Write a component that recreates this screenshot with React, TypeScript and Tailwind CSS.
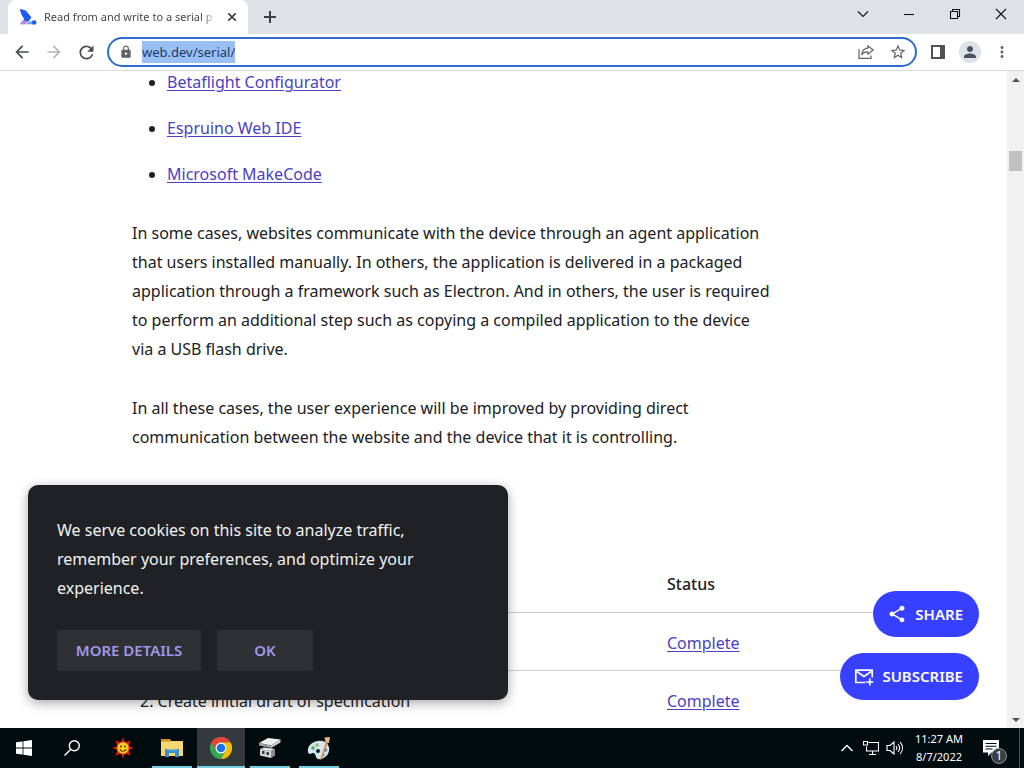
import type { ReactNode } from 'react'
import {
  MdArrowBack,
  MdArrowForward,
  MdLock,
  MdMoreVert,
  MdPerson,
  MdRefresh,
  MdShare,
  MdStarBorder,
} from 'react-icons/md'

const apps = ['Betaflight Configurator', 'Espruino Web IDE', 'Microsoft MakeCode']

const steps = [
  { name: '', status: 'Complete' },
  { name: '2. Create initial draft of specification', status: 'Complete' },
]

function SiteIcon() {
  return (
    <svg className="w-[17px] h-4 shrink-0" viewBox="0 0 17 16">
      <path d="M.6 0 5 1.200a2 2 0 0 1 1 .6l5.300 6.400-3 4.400-4.500-3L1.500 5.500 0 1Z" fill="#1a5cf5" />
      <path d="m3.200 11 5.600.6-2.400 3a2 2 0 0 1-1.600.9H1c-.8 0-1-.6-.6-1.200Z" fill="#b98ae6" />
      <path d="M11.300 8.200 8.300 12.500l-5.100-1.300L6 8Z" fill="#1a5cf5" />
      <path d="M6.400 15.200c1.500-2.400 3.600-3 7.600-3.500v3.600Z" fill="#6aa5f8" />
      <circle cx="14.200" cy="13.500" r="2.300" fill="#1a5cf5" />
    </svg>
  )
}

function ChromeIcon() {
  return (
    <svg className="w-[22px] h-[22px]" viewBox="0 0 24 24">
      <circle cx="12" cy="12" r="12" fill="#34a853" />
      <path d="M1.600 6A12 12 0 0 1 22.400 6H12a6 6 0 0 0-5.200 9Z" fill="#ea4335" />
      <path d="M22.400 6A12 12 0 0 1 12 24l5.200-9A6 6 0 0 0 12 6Z" fill="#fbbc04" />
      <circle cx="12" cy="12" r="6" fill="#fff" />
      <circle cx="12" cy="12" r="4.700" fill="#1a73e8" />
    </svg>
  )
}

function SunIcon() {
  return (
    <svg className="w-[22px] h-[22px]" viewBox="0 0 22 22">
      <path
        d="M11 0 12.900 5.500 18.800 3.200 16.500 9.100 22 11 16.500 12.900 18.800 18.800 12.900 16.500 11 22 9.100 16.500 3.200 18.800 5.500 12.900 0 11 5.500 9.100 3.200 3.200 9.100 5.500Z"
        fill="#d9170e"
      />
      <circle cx="11" cy="11" r="6" fill="#fcd31c" stroke="#f0521a" />
      <circle cx="9" cy="9.500" r="1" fill="#5b2b00" />
      <circle cx="13" cy="9.500" r="1" fill="#5b2b00" />
      <path d="M7.800 12.300c1.400 2.600 5 2.600 6.400 0" fill="none" stroke="#5b2b00" strokeWidth="1.200" />
    </svg>
  )
}

function FolderIcon() {
  return (
    <svg className="w-[22px] h-[20px]" viewBox="0 0 22 20">
      <path d="M0 1h9l1 2h12v15H0Z" fill="#f5cf6b" />
      <path d="M0 1h9l1 2.500H0Z" fill="#d98f1d" />
      <path d="M0 4h22v14H0Z" fill="#f9d775" />
      <path d="M4 11h14v8h-4v-4H8v4H4Z" fill="#3d8fc8" />
      <path d="M6 11h10v1.500H6Z" fill="#6fb2da" />
    </svg>
  )
}

function BoxIcon() {
  return (
    <svg className="w-[22px] h-[20px]" viewBox="0 0 22 20">
      <path d="M0 5 9 0l12.500 1.500L12 7.500Z" fill="#f0f0f0" />
      <path d="M0 5v2.500L12 10V7.500Z" fill="#9f9f9f" />
      <path d="M12 7.500V10l9.500-5.500v-3Z" fill="#cfcfcf" />
      <path d="m1 11 4-1.500 11 1.500-4 2Z" fill="#ededed" />
      <path d="m1 11 11 2v7L1 17.500Z" fill="#d6d6d6" />
      <path d="m12 13 4-2v6.500L12 20Z" fill="#8c8c8c" />
      <path d="M3 13h2.500v3H3ZM7.500 14H10v3H7.500Z" fill="#3c3c3c" />
    </svg>
  )
}

function PaintIcon() {
  return (
    <svg className="w-[24px] h-[24px]" viewBox="0 0 24 24">
      <path
        d="M11 5C4 6 0 11 1 16c.5 2 2 2.500 3.500 1.500S8 17 8.500 19.500 11 24 14 23c6-1.500 9-7 8-11.500S17 4 11 5Z"
        fill="#d5e6f2"
      />
      <circle cx="6" cy="12" r="1.700" fill="#4fa84c" />
      <circle cx="10" cy="9" r="1.700" fill="#8fbf6a" />
      <circle cx="11" cy="15" r="2" fill="#14202b" />
      <circle cx="18.500" cy="14" r="1.700" fill="#3c78d8" />
      <circle cx="16.500" cy="19" r="1.700" fill="#7fa9e0" />
      <path d="m19 6 2 .5-6.500 17h-1.500Z" fill="#e08a3c" />
      <path d="m17.500 1.500 5.500-.5-1 6-3.500-1Z" fill="#e8b88a" />
    </svg>
  )
}

function TitleBar() {
  return (
    <header className="flex h-[34px] shrink-0 bg-[#dee1e6] pl-2">
      <div className="flex w-60 items-center rounded-t-lg bg-white pl-3 pr-2 text-[#45484c]">
        <SiteIcon />
        <span className="ml-[7px] flex-1 overflow-hidden whitespace-nowrap text-[11px] [mask-image:linear-gradient(to_right,black_92%,transparent)]">
          Read from and write to a serial p
        </span>
        <button aria-label="Close tab" className="flex w-4 h-4 ml-2 items-center justify-center">
          <svg className="w-2 h-2" viewBox="0 0 8 8" stroke="#3c4043" strokeWidth="1.600">
            <path d="m0 0 8 8M8 0 0 8" />
          </svg>
        </button>
      </div>
      <button aria-label="New tab" className="flex w-11 items-center justify-center">
        <svg className="w-3 h-3" viewBox="0 0 12 12" stroke="#3c4043" strokeWidth="2">
          <path d="M6 0v12M0 6h12" />
        </svg>
      </button>
      <div className="ml-auto flex h-7">
        <WindowButton label="Search tabs">
          <path d="m1 3.500 5 5 5-5" />
        </WindowButton>
        <WindowButton label="Minimize">
          <path d="M1 6.500h10" />
        </WindowButton>
        <WindowButton label="Restore">
          <path d="M1.500 3.500h7v7h-7ZM3.500 3.500v-2h7v7h-2" />
        </WindowButton>
        <WindowButton label="Close">
          <path d="m1 1 10 10M11 1 1 11" />
        </WindowButton>
      </div>
    </header>
  )
}

function WindowButton({ label, children }: { label: string; children: ReactNode }) {
  return (
    <button aria-label={label} className="flex w-[46px] items-center justify-center">
      <svg className="w-3 h-3" viewBox="0 0 12 12" fill="none" stroke="#111" strokeWidth="1.100">
        {children}
      </svg>
    </button>
  )
}

function Toolbar() {
  return (
    <div className="flex h-[37px] shrink-0 items-center border-b border-[#dadce0] bg-white pl-1.5 pr-1.5 text-[#5f6368]">
      <div className="flex">
        <button aria-label="Back" className="flex w-8 justify-center text-[#4a4d51]">
          <MdArrowBack size={20} />
        </button>
        <button aria-label="Forward" className="flex w-8 justify-center text-[#b5b7ba]">
          <MdArrowForward size={20} />
        </button>
        <button aria-label="Reload" className="flex w-8 justify-center text-[#4a4d51]">
          <MdRefresh size={21} />
        </button>
      </div>
      <div className="mx-[5px] flex h-[30px] flex-1 items-center rounded-full border-2 border-[#2e6cd0] bg-white px-2.5 pr-px">
        <MdLock size={14} />
        <div className="ml-[9px] flex flex-1">
          <input
            aria-label="Address"
            defaultValue="web.dev/serial/"
            className="h-[22px] field-sizing-content bg-[#99bff5] text-[13px] text-[#1d3b63] outline-none"
          />
        </div>
        <button aria-label="Share this page" className="flex w-8 justify-center">
          <svg className="w-4 h-4" viewBox="0 0 16 16" fill="none" stroke="#5f6368" strokeWidth="1.200">
            <path d="M1 5v9.400h12V11.500" />
            <path d="M9.800 1.800 15.200 6l-5.400 4.200V7.800c-3 0-4.800.8-6 3 .3-4 2.500-6.300 6-6.600Z" strokeLinejoin="round" />
          </svg>
        </button>
        <button aria-label="Bookmark" className="flex w-8 justify-center">
          <MdStarBorder size={18} />
        </button>
      </div>
      <button aria-label="Side panel" className="flex w-8 justify-center">
        <svg className="w-3.5 h-3.5" viewBox="0 0 14 14" fill="#4f5256">
          <path fillRule="evenodd" d="M0 0h14v14H0ZM2 2v10h7V2Z" />
        </svg>
      </button>
      <button aria-label="Profile" className="flex w-8 justify-center">
        <span className="flex w-[22px] h-[22px] items-center justify-center rounded-full bg-[#dde1e8] text-[#4a5060]">
          <MdPerson size={18} />
        </span>
      </button>
      <button aria-label="Menu" className="flex w-8 justify-center">
        <MdMoreVert size={18} />
      </button>
    </div>
  )
}

function Article() {
  return (
    <main className="min-w-0 flex-1 overflow-hidden px-[132px] text-[16px] leading-[29px] text-[#202124]">
      <ul className="-mt-[3px] flex list-disc flex-col gap-[17px] pl-[35px]">
        {apps.map((app) => (
          <li key={app}>
            <a href="#" className="text-[#4a3fc4] underline underline-offset-2">
              {app}
            </a>
          </li>
        ))}
      </ul>
      <p className="mt-[30px] max-w-[640px]">
        In some cases, websites communicate with the device through an agent application that users installed
        manually. In others, the application is delivered in a packaged application through a framework such as
        Electron. And in others, the user is required to perform an additional step such as copying a compiled
        application to the device via a USB flash drive.
      </p>
      <p className="mt-[30px] max-w-[640px]">
        In all these cases, the user experience will be improved by providing direct communication between the
        website and the device that it is controlling.
      </p>
      <table className="mt-[102px] w-full table-fixed text-left">
        <thead>
          <tr className="h-[58px] border-b border-[#ccced1]">
            <td />
            <th className="w-[208px] pt-1 font-medium">Status</th>
          </tr>
        </thead>
        <tbody>
          {steps.map((step, i) => (
            <tr key={i} className="h-[58px] border-b border-[#ccced1]">
              <td className="pt-1 pl-2">{step.name}</td>
              <td className="pt-1">
                <a href="#" className="text-[#4a3fc4] underline underline-offset-2">
                  {step.status}
                </a>
              </td>
            </tr>
          ))}
        </tbody>
      </table>
    </main>
  )
}

function Scrollbar() {
  return (
    <div className="flex w-[17px] shrink-0 flex-col items-center bg-[#f1f1f1]">
      <svg className="w-2 h-[17px]" viewBox="0 0 8 17" fill="#505050">
        <path d="M0 11 4 7l4 4Z" />
      </svg>
      <div className="mt-[63px] h-5 w-[13px] bg-[#c1c1c1]" />
      <svg className="mt-auto w-2 h-[17px]" viewBox="0 0 8 17" fill="#505050">
        <path d="m0 7 4 4 4-4Z" />
      </svg>
    </div>
  )
}

function CookieBanner() {
  return (
    <section className="absolute bottom-7 left-7 w-[480px] rounded-[10px] bg-[#202124] px-[29px] pt-[31px] pb-[29px] text-[16px] leading-[29px] text-[#f1f3f4] shadow-[0_3px_12px_rgba(0,0,0,0.35)]">
      <p className="max-w-[380px]">
        We serve cookies on this site to analyze traffic, remember your preferences, and optimize your experience.
      </p>
      <div className="mt-[27px] flex gap-4 text-[15px] font-semibold text-[#9f98e8]">
        <button className="h-[41px] w-36 rounded-xs bg-[#2f3034]">MORE DETAILS</button>
        <button className="h-[41px] w-24 rounded-xs bg-[#2f3034]">OK</button>
      </div>
    </section>
  )
}

function FloatingActions() {
  return (
    <div className="absolute right-7 bottom-7 mr-[17px] flex flex-col items-end gap-4 text-[15px] font-semibold text-white">
      <button className="flex h-[46px] items-center gap-2 rounded-full bg-[#3740ff] pr-4 pl-3.5">
        <MdShare size={20} />
        SHARE
      </button>
      <button className="flex h-[47px] items-center gap-2 rounded-full bg-[#3740ff] pr-4 pl-3.5">
        <svg className="w-5 h-5" viewBox="0 0 20 20" fill="none" stroke="currentColor" strokeWidth="1.700">
          <path d="M11.500 15.500H1.800V3.200h16.400v7.300" />
          <path d="m2 4 8 5.500L18 4" />
          <path d="M15.800 11.500v7M12.300 15h7" />
        </svg>
        SUBSCRIBE
      </button>
    </div>
  )
}

function TaskButton({ label, state, children }: { label: string; state?: 'open' | 'active'; children: ReactNode }) {
  return (
    <button
      aria-label={label}
      className={`relative flex h-full w-12 items-center justify-center ${state === 'active' ? 'bg-[#343a3c]' : ''}`}
    >
      {children}
      {state && (
        <span className={`absolute bottom-0 h-0.5 bg-[#76cfe0] ${state === 'active' ? 'w-full' : 'w-10'}`} />
      )}
    </button>
  )
}

function Taskbar() {
  return (
    <footer className="flex h-10 shrink-0 items-center bg-[#020c0e] text-white">
      <TaskButton label="Start">
        <svg className="w-4 h-4" viewBox="0 0 16 16" fill="#fff">
          <path d="m0 2.300 6.600-.9v6.200H0ZM7.400 1.300 16 0v7.600H7.400ZM0 8.400h6.600v6.200L0 13.700ZM7.400 8.400H16V16l-8.600-1.300Z" />
        </svg>
      </TaskButton>
      <TaskButton label="Search">
        <svg className="w-4 h-4" viewBox="0 0 16 16" fill="none" stroke="#fff" strokeWidth="1.400">
          <circle cx="10.300" cy="5.700" r="5" />
          <path d="M6.600 9.400.5 15.500" />
        </svg>
      </TaskButton>
      <div className="ml-[3px] flex h-full gap-px">
        <TaskButton label="Sun">
          <SunIcon />
        </TaskButton>
        <TaskButton label="File Explorer" state="open">
          <FolderIcon />
        </TaskButton>
        <TaskButton label="Chrome" state="active">
          <ChromeIcon />
        </TaskButton>
        <TaskButton label="Devices" state="open">
          <BoxIcon />
        </TaskButton>
        <TaskButton label="Paint" state="open">
          <PaintIcon />
        </TaskButton>
      </div>
      <div className="ml-auto flex h-full items-center">
        <button aria-label="Show hidden icons" className="flex w-6 justify-center">
          <svg className="w-3 h-3" viewBox="0 0 12 12" fill="none" stroke="#fff" strokeWidth="1.400">
            <path d="m.5 9 5.500-5.500L11.500 9" />
          </svg>
        </button>
        <button aria-label="Network" className="flex w-6 justify-center">
          <svg className="w-4 h-4" viewBox="0 0 16 16" fill="none" stroke="#fff" strokeWidth="1.100">
            <path d="M5.500 2.500h10v8.500h-12V6.500M9.500 11v3.500M6 14.500h7" />
            <path d="M.5 1.500h4v3.500h-4Z" />
          </svg>
        </button>
        <button aria-label="Volume" className="flex w-6 justify-center">
          <svg className="w-[18px] h-4" viewBox="0 0 18 16" fill="none" stroke="#fff" strokeWidth="1.100">
            <path d="M1 5.500h3L8 2v12l-4-3.500H1Z" />
            <path d="M10 6c1 1.200 1 2.800 0 4M12 4c2 2.400 2 5.600 0 8M14.200 2.200c3 3.500 3 8.100 0 11.600" />
          </svg>
        </button>
        <div className="w-16 text-center text-[11px] leading-[18px]">
          <div>11:27 AM</div>
          <div>8/7/2022</div>
        </div>
        <button aria-label="Notifications" className="relative flex w-12 h-full items-center pl-3">
          <svg className="w-4 h-4 shrink-0" viewBox="0 0 16 16">
            <path d="M0 0h16v12.500H8.500L5 16v-3.500H0Z" fill="#fff" />
            <path d="M2.500 3.500h11M2.500 6.200h11M2.500 9h7" stroke="#020c0e" strokeWidth="1.100" />
          </svg>
          <span className="absolute bottom-1 right-3 flex w-4 h-4 items-center justify-center rounded-full border border-[#8a8f92] bg-[#3a3f42] text-[12px]">
            1
          </span>
        </button>
        <div className="mr-1 h-full w-px bg-[#4b5254]" />
      </div>
    </footer>
  )
}

export default function App() {
  return (
    <div className="flex h-screen flex-col overflow-hidden bg-white font-['Noto_Sans','Open_Sans',sans-serif]">
      <TitleBar />
      <Toolbar />
      <div className="relative flex min-h-0 flex-1">
        <Article />
        <Scrollbar />
        <CookieBanner />
        <FloatingActions />
      </div>
      <Taskbar />
    </div>
  )
}
